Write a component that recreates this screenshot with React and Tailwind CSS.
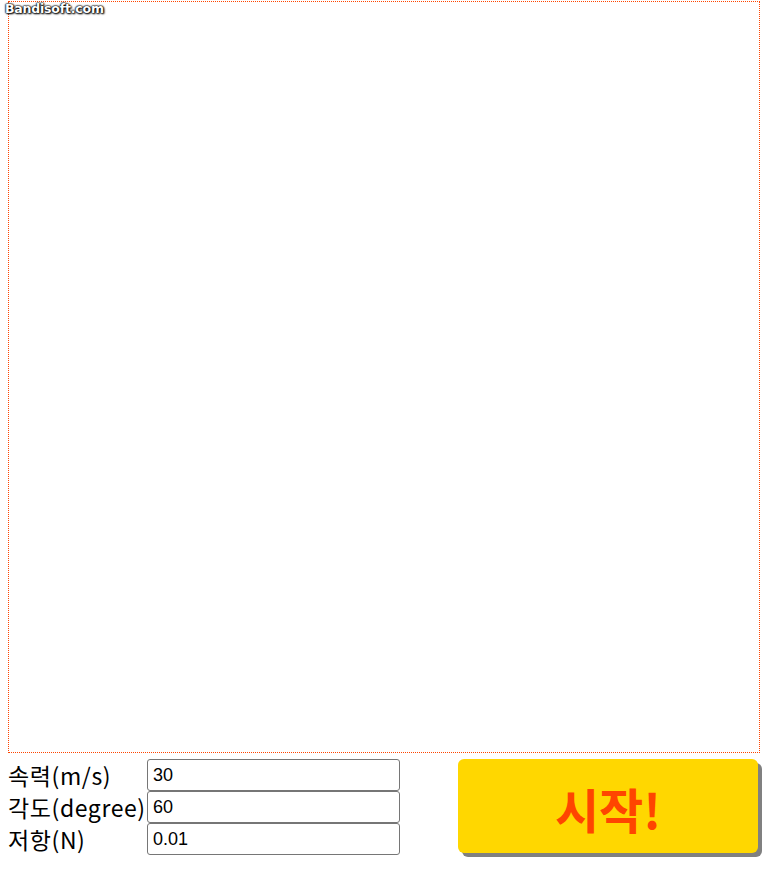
import React from "react";

export default function App() {
  const rows = [
    ["속력(m/s)", "30"],
    ["각도(degree)", "60"],
    ["저항(N)", "0.01"],
  ];
  return (
    <div className="w-[780px] h-[879px] bg-white relative" style={{ fontFamily: '"Noto Sans CJK KR", "Noto Sans", sans-serif' }}>
      <div className="pt-px pl-2">
        <div className="w-[752px] h-[752px] border border-dotted border-[#ff4500]"></div>
        <div className="flex mt-[6px]">
          <div className="flex flex-col w-[392px]">
            {rows.map(([l, v]) => (
              <div key={l} className="flex items-center h-8">
                <div className="w-[139px] shrink-0 text-[23px] leading-none text-black whitespace-nowrap tracking-[0.6px]">{l}</div>
                <input
                  defaultValue={v}
                  className="w-[254px] h-8 border border-[#767676] rounded-[3px] pl-[5px] pr-1 text-[18px] text-black outline-none"
                  style={{ fontFamily: '"Liberation Sans", Arial, sans-serif' }}
                />
              </div>
            ))}
          </div>
          <button className="ml-[58px] w-[300px] h-[94px] bg-[#ffd700] rounded-[6px] shadow-[4px_4px_0_#808080] text-[#ff4500] text-[48px] font-bold leading-none flex items-center justify-center pt-1">
            시작!
          </button>
        </div>
      </div>
      <div
        className="absolute left-[5px] top-[3px] text-[12.5px] font-bold text-white leading-none tracking-[-0.2px]"
        style={{ fontFamily: '"DejaVu Sans", sans-serif', textShadow: "0 0 1px #000, 0 0 2px #000, 0 0 2px #000, 1px 1px 2px #000" }}
      >
        Bandisoft.com
      </div>
    </div>
  );
}
